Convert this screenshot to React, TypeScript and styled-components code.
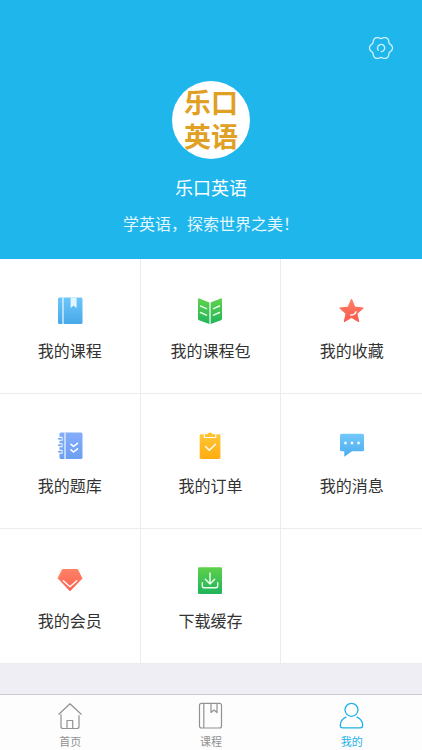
import React from "react";
import styled, { createGlobalStyle } from "styled-components";

const GlobalStyle = createGlobalStyle`
  *, *::before, *::after { box-sizing: border-box; }
  body {
    margin: 0;
    background: #efeef4;
    font-family: "Noto Sans CJK SC", "Noto Sans", sans-serif;
  }
`;

const Page = styled.div`
  min-height: 100vh;
  display: flex;
  flex-direction: column;
`;

const Header = styled.header`
  background: #1fb6ec;
  color: #fff;
  display: flex;
  flex-direction: column;
  align-items: center;
  padding-bottom: 24px;
`;

const TopBar = styled.div`
  align-self: stretch;
  display: flex;
  justify-content: flex-end;
  padding: 34px 27px 19px;
`;

const SettingsButton = styled.button`
  width: 28px;
  height: 28px;
  padding: 0;
  border: 0;
  background: none;
  cursor: pointer;
  svg { display: block; }
`;

const Avatar = styled.div`
  width: 78px;
  height: 78px;
  padding-bottom: 3px;
  border-radius: 50%;
  background: #fff;
  color: #e0a023;
  display: flex;
  align-items: center;
  justify-content: center;
`;

const AvatarText = styled.span`
  width: 2em;
  font-size: 27px;
  line-height: 34px;
  font-weight: 700;
`;

const UserName = styled.h1`
  margin: 16px 0 12px;
  font-size: 18px;
  line-height: 24px;
  font-weight: 400;
`;

const Motto = styled.p`
  margin: 0;
  font-size: 16px;
  line-height: 24px;
  color: #e4f7ff;
`;

const Grid = styled.main`
  display: grid;
  grid-template-columns: repeat(3, 1fr);
  background: #fff;
`;

const Cell = styled.div`
  height: 135px;
  border-bottom: 1px solid #ececee;
  &:not(:nth-child(3n)) { border-right: 1px solid #ececee; }
`;

const CellLink = styled.a`
  height: 100%;
  display: flex;
  flex-direction: column;
  align-items: center;
  padding-top: 38px;
  gap: 13px;
  color: #333;
  text-decoration: none;
  font-size: 16px;
  line-height: 24px;
`;

const TabBar = styled.nav`
  margin-top: auto;
  display: flex;
  border-top: 1px solid #c9c9ce;
  background: #fdfdfd;
`;

const Tab = styled.a<{ $active?: boolean }>`
  flex: 1;
  display: flex;
  flex-direction: column;
  align-items: center;
  gap: 4px;
  padding: 7px 0 2px;
  font-size: 11px;
  line-height: 14px;
  text-decoration: none;
  color: ${(p) => (p.$active ? "#1fb0e8" : "#929292")};
`;

const Icon = ({ children }: { children: React.ReactNode }) => (
  <svg width="28" height="28" viewBox="0 0 28 28" fill="none" strokeLinecap="round" strokeLinejoin="round" aria-hidden="true">
    {children}
  </svg>
);

const Gradient = ({ id, from, to }: { id: string; from: string; to: string }) => (
  <linearGradient id={id} x1="0" y1="0" x2="0" y2="1">
    <stop offset="0" stopColor={from} />
    <stop offset="1" stopColor={to} />
  </linearGradient>
);

const gearOutline =
  Array.from({ length: 72 }, (_, i) => {
    const a = (i * Math.PI) / 36;
    const r = 10.6 + 1.0 * Math.cos(6 * a) - 0.1 * Math.cos(12 * a);
    return `${i ? "L" : "M"}${(14 + r * Math.cos(a)).toFixed(2)} ${(14 + r * Math.sin(a)).toFixed(2)}`;
  }).join("") + "Z";

const GearIcon = () => (
  <Icon>
    <g stroke="#d3f3ff" strokeWidth="1.3">
      <path d={gearOutline} />
      <path d="M11.3 16.3A3.6 3.6 0 1 1 14.3 17.6" />
    </g>
  </Icon>
);

const CourseIcon = () => (
  <Icon>
    <Gradient id="course" from="#6cc6fa" to="#48a9e8" />
    <rect x="2" y=".5" width="24.5" height="26.5" rx="1.5" fill="url(#course)" />
    <path d="M7 .5V27" stroke="#fff" strokeWidth="1.1" strokeLinecap="butt" />
    <path d="M14.6 .5H20.6V11.3L17.6 8.6L14.6 11.3Z" fill="#e4f5ff" />
  </Icon>
);

const PackageIcon = () => (
  <Icon>
    <Gradient id="pack" from="#61d24c" to="#20b55c" />
    <path d="M2 2.2Q2 .8 3.3 1.4L13.4 5.4V27L3 23.3Q2 23 2 22Z" fill="url(#pack)" />
    <path d="M26 2.2Q26 .8 24.7 1.4L14.6 5.4V27L25 23.3Q26 23 26 22Z" fill="url(#pack)" />
    <path d="M4.5 9L10.5 11.7M4.5 15.5L10.5 18.2M23.5 9L17.5 11.7M23.5 15.5L17.5 18.2" stroke="#e9ffe8" strokeWidth="1.4" />
  </Icon>
);

const StarIcon = () => (
  <Icon>
    <Gradient id="star" from="#ff8064" to="#f95c50" />
    <path d="M13.5 2.5L16.8 10.2L25 11L18.8 16.5L20.6 24.5L13.5 20.2L6.4 24.5L8.2 16.5L2 11L10.2 10.2Z" fill="url(#star)" stroke="url(#star)" strokeWidth="1.2" />
    <path d="M12.8 18Q16.7 18 18 14.7" stroke="#fff" strokeWidth="1.4" />
  </Icon>
);

const QuestionsIcon = () => (
  <Icon>
    <Gradient id="bank" from="#83adfa" to="#6c9ff2" />
    <rect x="3.5" y=".5" width="23" height="26.5" rx="1.5" fill="url(#bank)" />
    <path d="M9 .5V27" stroke="#fff" strokeWidth="1.1" strokeLinecap="butt" />
    {[6.5, 13, 19.5].map((y) => (
      <g key={y}>
        <path d={`M3 ${y - 1.3}H6V${y + 1.8}H3`} stroke="#fff" strokeWidth="1.1" />
        <path d={`M2.5 ${y + 0.3}H5`} stroke="#79a8f7" strokeWidth="1.5" />
      </g>
    ))}
    <path d="M15 12.3L17.5 14.5L21.5 11.3M15 17.8L17.5 20L21.5 16.8" stroke="#fff" strokeWidth="1.6" />
  </Icon>
);

const OrderIcon = () => (
  <Icon>
    <Gradient id="order" from="#ffc637" to="#ffac10" />
    <rect x="3.7" y="2.2" width="20.7" height="24.8" rx="1.4" fill="url(#order)" />
    <path d="M8.3 2V5.5H19.8V2" stroke="#fff" strokeWidth="1.1" />
    <path d="M9 2.5H11.6Q12 .5 14 .5T16.4 2.5H19V4.8H9Z" fill="#ffc02e" />
    <path d="M9.5 14.5L13.3 18.3L19.5 12.3" stroke="#fff" strokeWidth="1.4" />
  </Icon>
);

const MessageIcon = () => (
  <Icon>
    <Gradient id="message" from="#72c8fa" to="#4badf0" />
    <path d="M3.5 1.8H24.5Q26 1.8 26 3.3V18Q26 19.3 24.5 19.3H14L6.3 24.8V19.3H3.5Q2 19.3 2 18V3.3Q2 1.8 3.5 1.8Z" fill="url(#message)" />
    <path d="M6.3 9.8H8.7V12.2H6.3ZM12.8 9.8H15.2V12.2H12.8ZM19.3 9.8H21.7V12.2H19.3Z" fill="#fff" />
  </Icon>
);

const MemberIcon = () => (
  <Icon>
    <Gradient id="member" from="#ff8265" to="#fb6050" />
    <path d="M6.7 2.5H21.5L26 11.5L14 23.8L2.3 11.5Z" fill="url(#member)" stroke="url(#member)" strokeWidth="1" />
    <path d="M7.3 13.7L14 19.7L20.7 13.7" stroke="#fff" strokeWidth="1.3" />
  </Icon>
);

const DownloadIcon = () => (
  <Icon>
    <Gradient id="download" from="#5fd04b" to="#1fb45c" />
    <rect x="2" y=".3" width="24" height="26.7" rx="1.3" fill="url(#download)" />
    <path d="M14 6V16.5M9.3 12.3L14 17L18.7 12.3M6.3 15.7V19Q6.3 20.8 8 20.8H20Q21.7 20.8 21.7 19V15.7" stroke="#efffed" strokeWidth="1.4" />
  </Icon>
);

const HomeIcon = () => (
  <Icon>
    <path d="M2.8 12.2L14 1.8L25.2 12.2M5 12.5V24.5Q5 26.5 7 26.5H21Q23 26.5 23 24.5V13.5M11 26.3V18.5H16.7V26.3" stroke="currentColor" strokeWidth="1.2" />
  </Icon>
);

const BookIcon = () => (
  <Icon>
    <path d="M4.5 1.3H22.5Q24.5 1.3 24.5 3.3V24Q24.5 26 22.5 26H4.5Q2.5 26 2.5 24V3.3Q2.5 1.3 4.5 1.3ZM6.8 1.3V26M14 1.3V10.5L17 8L20 10.5V1.3" stroke="currentColor" strokeWidth="1.2" />
  </Icon>
);

const UserIcon = () => (
  <Icon>
    <circle cx="13.5" cy="7.8" r="6.5" stroke="currentColor" strokeWidth="1.3" />
    <path d="M8 15.2Q2.5 17.7 2.3 23.2Q2.3 25.8 4.8 25.8H22.2Q24.7 25.8 24.7 23.2Q24.5 17.7 19 15.2" stroke="currentColor" strokeWidth="1.3" />
  </Icon>
);

const items = [
  { label: "我的课程", Glyph: CourseIcon },
  { label: "我的课程包", Glyph: PackageIcon },
  { label: "我的收藏", Glyph: StarIcon },
  { label: "我的题库", Glyph: QuestionsIcon },
  { label: "我的订单", Glyph: OrderIcon },
  { label: "我的消息", Glyph: MessageIcon },
  { label: "我的会员", Glyph: MemberIcon },
  { label: "下载缓存", Glyph: DownloadIcon },
];

const tabs = [
  { label: "首页", Glyph: HomeIcon },
  { label: "课程", Glyph: BookIcon },
  { label: "我的", Glyph: UserIcon, active: true },
];

export default function App() {
  return (
    <Page>
      <GlobalStyle />
      <Header>
        <TopBar>
          <SettingsButton type="button" aria-label="设置">
            <GearIcon />
          </SettingsButton>
        </TopBar>
        <Avatar>
          <AvatarText>乐口英语</AvatarText>
        </Avatar>
        <UserName>乐口英语</UserName>
        <Motto>学英语，探索世界之美！</Motto>
      </Header>
      <Grid>
        {items.map(({ label, Glyph }) => (
          <Cell key={label}>
            <CellLink href="#">
              <Glyph />
              <span>{label}</span>
            </CellLink>
          </Cell>
        ))}
        <Cell />
      </Grid>
      <TabBar>
        {tabs.map(({ label, Glyph, active }) => (
          <Tab key={label} href="#" $active={active} aria-current={active ? "page" : undefined}>
            <Glyph />
            <span>{label}</span>
          </Tab>
        ))}
      </TabBar>
    </Page>
  );
}
